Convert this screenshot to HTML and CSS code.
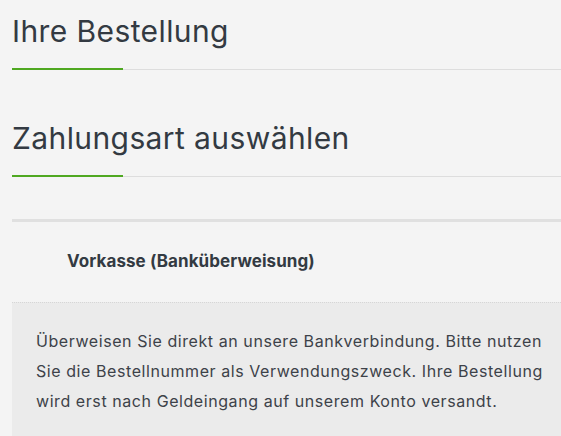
FILE: index.html
```html
<!DOCTYPE html>
<html lang="de">
<head>
    <meta charset="UTF-8">
    <meta name="viewport" content="width=device-width, initial-scale=1.0">
    <title>Kasse</title>
    <link rel="stylesheet" href="styles.css">
</head>
<body>
    <div class="checkout">
        <!-- Order summary heading -->
        <h2 class="section-title">Ihre Bestellung</h2>

        <!-- Payment method -->
        <h2 class="section-title section-title--spaced">Zahlungsart auswählen</h2>

        <ul class="payment-methods">
            <li class="payment-method">
                <label class="payment-label">Vorkasse (Banküberweisung)</label>
                <div class="payment-box">
                    <p>Überweisen Sie direkt an unsere Bankverbindung. Bitte nutzen Sie die Bestellnummer als Verwendungszweck. Ihre Bestellung wird erst nach Geldeingang auf unserem Konto versandt.</p>
                </div>
            </li>
        </ul>
    </div>
</body>
</html>
```

FILE: styles.css
```css
body {
    margin: 0;
    background-color: #f4f4f4;
    font-family: 'Inter', sans-serif;
    color: #333a42;
}
.checkout {
    padding: 13px 0 0 12px;
}
.section-title {
    position: relative;
    margin: 0;
    padding-bottom: 20px;
    font-size: 30px;
    font-weight: 400;
    line-height: 36px;
    letter-spacing: 0.4px;
    border-bottom: 1px solid #dddddd;
}
.section-title::after {
    /* green accent over the grey rule */
    content: "";
    position: absolute;
    left: 0;
    bottom: -1px;
    width: 111px;
    height: 2px;
    background-color: #4fa821;
}
.section-title--spaced {
    margin-top: 50px;
}
.payment-methods {
    list-style: none;
    margin: 42px 0 0 0;
    padding: 0;
    border-top: 3px solid #e0e0e0;
}
.payment-label {
    display: block;
    padding: 27px 0 29px 55px;
    font-size: 17px;
    font-weight: 700;
    line-height: 24px;
    letter-spacing: 0.08px;
}
.payment-box {
    background-color: #ebebeb;
    border-top: 1px dotted #d6d6d6;
    padding: 23px 0 20px 24px;
}
.payment-box p {
    margin: 0;
    font-size: 16px;
    line-height: 30px;
    letter-spacing: 0.57px;
    color: #3d4249;
    max-width: 520px;
}
```
